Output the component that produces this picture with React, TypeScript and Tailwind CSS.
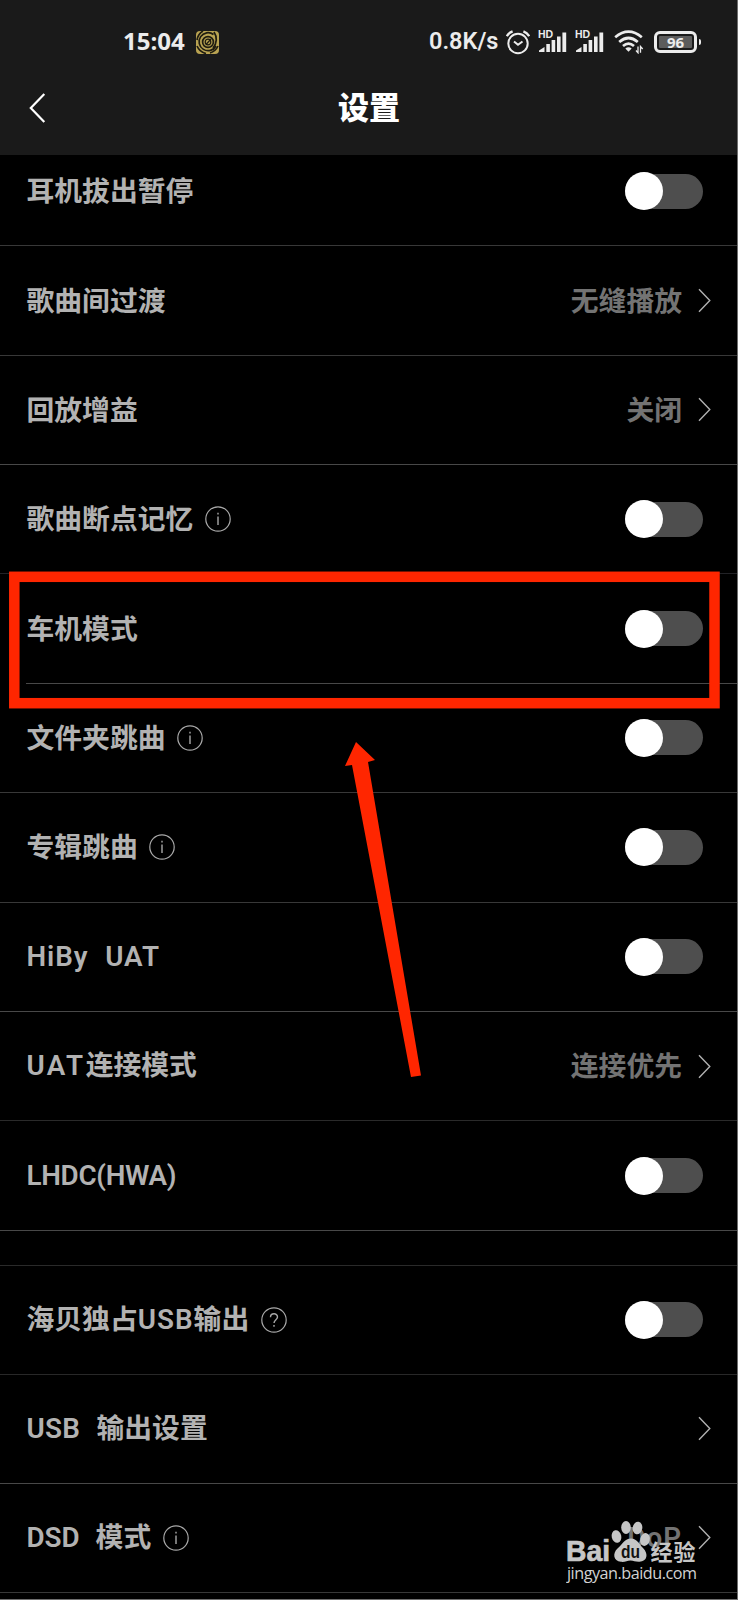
import type { ReactNode } from "react";

type Setting = {
  label: ReactNode;
  hint?: "i" | "?";
  value?: ReactNode;
  toggle?: boolean;
  inset?: boolean;
  line?: string;
};

const HANZI = "font-['Noto_Sans_CJK_SC',sans-serif]";

// Latin words inside a label use a different face from the Chinese text
function Latin({ children, className = "" }: { children: ReactNode; className?: string }) {
  return <span className={`font-['Roboto','Noto_Sans_CJK_SC',sans-serif] font-semibold ${className}`}>{children}</span>;
}

const PLAYBACK: Setting[] = [
  { label: "耳机拔出暂停", toggle: true },
  { label: "歌曲间过渡", value: "无缝播放" },
  { label: "回放增益", value: "关闭", line: "border-[#484848]" },
  { label: "歌曲断点记忆", hint: "i", toggle: true, line: "border-[#222226]" },
  { label: "车机模式", toggle: true, inset: true, line: "border-[#484848]" },
  { label: "文件夹跳曲", hint: "i", toggle: true },
  { label: "专辑跳曲", hint: "i", toggle: true },
  { label: <Latin className="tracking-[0.9px] [word-spacing:9px]">HiBy UAT</Latin>, toggle: true, line: "border-[#484848]" },
  { label: <><Latin className="tracking-[2.4px]">UAT</Latin>连接模式</>, value: "连接优先", line: "border-[#2a2a2a]" },
  { label: <Latin className="tracking-[-0.3px]">LHDC(HWA)</Latin>, toggle: true, line: "border-[#484848]" },
];

const OUTPUT: Setting[] = [
  { label: <>海贝独占<Latin className="tracking-[1px]">USB</Latin>输出</>, hint: "?", toggle: true, line: "border-[#282828]" },
  { label: <><Latin className="tracking-[0.3px] [word-spacing:9px]">USB </Latin>输出设置</>, value: "", line: "border-[#484848]" },
  {
    label: <><Latin className="[word-spacing:9px]">DSD </Latin>模式</>,
    hint: "i",
    value: <Latin className="tracking-[1px]">DoP</Latin>,
  },
];

function Toggle() {
  return (
    <div className="mr-2 flex h-[35px] w-[78px] items-center rounded-full bg-[#4e4e4e]">
      <div className="size-[38px] shrink-0 rounded-full bg-white" />
    </div>
  );
}

function Chevron() {
  return (
    <svg width="13" height="25" viewBox="0 0 13 25" fill="none" stroke="#b0b0b0" strokeWidth="1.4">
      <path d="M1 1.2 L11.8 12.5 L1 23.8" />
    </svg>
  );
}

function Hint({ kind }: { kind: "i" | "?" }) {
  return (
    <svg width="26" height="26" viewBox="0 0 26 26" fill="none" stroke="#a8a8a8" strokeWidth="1.2">
      <circle cx="13" cy="13" r="12.2" />
      {kind === "i" ? (
        <path d="M13 10.5 V19 M13 6.8 V8.6" strokeWidth="1.4" />
      ) : (
        <path d="M9.5 10.2 C9.5 5.7 16.5 5.7 16.5 10 C16.5 12.6 13 12.8 13 16 M13 18 V19.8" strokeWidth="1.4" />
      )}
    </svg>
  );
}

function Row({ item, height }: { item: Setting; height: string }) {
  return (
    <div
      className={`flex shrink-0 items-center border-b pr-[26px] ${height} ${item.inset ? "ml-[26px]" : "pl-[26px]"} ${item.line ?? "border-[#383838]"}`}
    >
      <span className="pb-[2px] pl-[0.5px] text-[27.8px] leading-none font-bold whitespace-pre text-[#b2b2b2]">{item.label}</span>
      {item.hint && (
        <span className="ml-[11.5px]">
          <Hint kind={item.hint} />
        </span>
      )}
      <div className="ml-auto flex items-center">
        {item.toggle ? (
          <Toggle />
        ) : (
          <>
            <span className="mr-4 pb-[2px] text-[27.8px] leading-none font-bold text-[#737373]">{item.value}</span>
            <Chevron />
          </>
        )}
      </div>
    </div>
  );
}

function Signal() {
  return (
    <svg className="mb-[2px]" width="30" height="25" viewBox="0 -2 30 25" fill="#ececec">
      <text x="0" y="7.2" fontSize="10.5" fontWeight="700" fontFamily="Liberation Sans, sans-serif">HD</text>
      <path d="M1 21 V19.5 L6.5 16 V21 Z" />
      <rect x="8.3" y="13" width="3.6" height="8" />
      <rect x="13.6" y="9" width="3.6" height="12" />
      <rect x="19" y="5.5" width="3.6" height="15.5" />
      <rect x="24.4" y="1.5" width="3.8" height="19.5" />
    </svg>
  );
}

function StatusBar() {
  return (
    <div className="flex h-[84px] items-center pr-[36px] pl-[123px] font-['Open_Sans',sans-serif] text-[#ececec]">
      <span className="w-[73px] pb-[2px] text-[24px] leading-none font-bold">15:04</span>
      <svg width="23" height="23" viewBox="0 0 23 23" fill="none" stroke="#1f1c10" strokeWidth="1.7">
        <rect width="23" height="23" rx="4" fill="#b9a352" stroke="none" />
        <path d="M7 0 A13 13 0 0 0 1 9 M1 15 A13 13 0 0 0 10 22.5 M14 22 A13 13 0 0 0 22 15" />
        <path d="M17.5 3.5 A9 9 0 1 0 20 15" />
        <path d="M18 1 A13 13 0 0 1 17 17" />
        <circle cx="12" cy="11" r="5.4" />
        <circle cx="12" cy="11" r="2.8" strokeWidth="1.2" />
        <path d="M10 13.5 L15 8" strokeWidth="1.2" />
      </svg>

      <div className="ml-auto flex items-center">
        <span className="w-[77px] pb-[1px] font-['Roboto',sans-serif] text-[23.5px] leading-none font-semibold">0.8K/s</span>
        <svg className="mr-[8px]" width="24" height="25" viewBox="0 0 24 25" fill="none" stroke="#ececec" strokeWidth="2">
          <circle cx="12" cy="13.5" r="9.7" />
          <path d="M8 11.5 L12 14.8 L16.5 11.5" />
          <path d="M0.8 6.2 Q2.8 2.8 6.6 1.4 M17.4 1.4 Q21.2 2.8 23.2 6.2" strokeWidth="2.4" />
        </svg>
        <Signal />
        <span className="w-[7px]" />
        <Signal />
        <svg className="mr-[10px] ml-[9px]" width="30" height="24" viewBox="0 0 30 24" fill="none" stroke="#ececec" strokeWidth="2.7">
          <path d="M1.2 7.2 Q14.5 -3.8 27.8 7.2" />
          <path d="M5.2 12 Q14.5 4 23.8 12" />
          <path d="M9 16 Q14.5 11.2 20 16" />
          <path d="M11.3 18.5 Q14.5 16 17.7 18.5 L14.5 21.8 Z" fill="#ececec" stroke="none" />
          <path d="M24 16.5 V22.8 L22 20.5 M26.5 22.8 V16.5 L28.7 19" strokeWidth="1.3" />
        </svg>
        <div className="flex h-[22px] w-[43px] items-center justify-center rounded-[6px] border-[3px] border-[#ececec] p-[2px]">
          <div className="flex h-full w-full items-center justify-center rounded-[1px] bg-[#5c5c5c] text-[15px] leading-none font-bold">
            96
          </div>
        </div>
        <div className="ml-[1.5px] h-[6px] w-[2.5px] rounded-r-sm bg-[#ececec]" />
      </div>
    </div>
  );
}

function Watermark() {
  return (
    <div className="absolute top-[1518px] left-[566px] h-[66px] w-[134px]">
      <svg width="134" height="66" viewBox="0 0 134 66" fill="#c6c6c6">
        <text x="0" y="43" fontSize="29" fontWeight="700" fontFamily="Liberation Sans, sans-serif" stroke="#c6c6c6" strokeWidth="0.7" textLength="44" lengthAdjust="spacingAndGlyphs">Bai</text>
        <ellipse cx="50.5" cy="18.5" rx="4.8" ry="6.3" transform="rotate(-12 50.5 18.5)" />
        <ellipse cx="60" cy="9.5" rx="4.8" ry="6.4" />
        <ellipse cx="71.5" cy="10" rx="4.8" ry="6.4" transform="rotate(10 71.5 10)" />
        <ellipse cx="79" cy="21.5" rx="4.8" ry="6.5" transform="rotate(14 79 21.5)" />
        <path d="M65 20.5 C71 20.5 73 26 77 30 C83 36 81 43.5 73.5 43.8 C69 44 68 42.5 64.5 42.5 C61 42.5 59 44.3 55 43.8 C47 43.2 46.5 35 51.5 30.5 C57 26 58.5 20.5 65 20.5 Z" />
        <text x="55" y="39.5" fontSize="18" fontWeight="700" fill="#111" fontFamily="Liberation Sans, sans-serif" textLength="19" lengthAdjust="spacingAndGlyphs">du</text>
        <text x="84.5" y="41.5" fontSize="22" fontWeight="700" fontFamily="Noto Sans CJK SC, sans-serif" textLength="45">经验</text>
        <text x="1" y="61" fontSize="16.2" fontFamily="Open Sans, sans-serif" fill="#d2d2d2" textLength="130">jingyan.baidu.com</text>
      </svg>
    </div>
  );
}

export default function App() {
  return (
    <div className={`relative h-[1600px] w-[738px] overflow-hidden border-r border-b border-[#6e6e6e] bg-black ${HANZI}`}>
      <header className="relative z-10 h-[155px] bg-[#1a1a1a]">
        <StatusBar />
        <div className="flex h-12 items-center pl-[29px]">
          <svg width="17" height="30" viewBox="0 0 17 30" fill="none" stroke="#fff" strokeWidth="2.2">
            <path d="M15.3 1 L1.8 15 L15.3 29" />
          </svg>
          <h1 className="flex-1 pr-[45px] pb-[5px] text-center text-[31px] leading-none font-black text-white">设置</h1>
        </div>
      </header>

      {/* list is scrolled slightly under the header */}
      <main className="-mt-[18.2px] flex flex-col">
        {PLAYBACK.map((item, i) => (
          <Row key={i} item={item} height="h-[109.4px]" />
        ))}
        <div className="h-[35px] shrink-0 border-b border-[#2a2a2a]" />
        {OUTPUT.map((item, i) => (
          <Row key={i} item={item} height="h-[109.1px]" />
        ))}
      </main>

      {/* highlight box and arrow */}
      <svg className="absolute top-0 left-0 z-20" width="738" height="1600" viewBox="0 0 738 1600">
        <rect x="14.3" y="576.8" width="700.2" height="126.4" fill="none" stroke="#ff2600" strokeWidth="10.5" />
        <path d="M356 742 L375 760 L368 762 L421 1075.5 L411 1077 L352 765 L345 766 Z" fill="#ff2600" />
      </svg>

      <Watermark />
    </div>
  );
}
